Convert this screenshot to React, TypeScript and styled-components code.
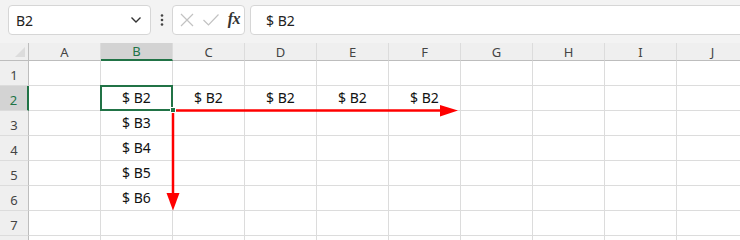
import React from "react";
import styled, { createGlobalStyle, css } from "styled-components";

const Global = createGlobalStyle`
  html, body { margin: 0; padding: 0; background: #ffffff; }
  body { width: 740px; height: 240px; overflow: hidden; font-family: "Noto Sans", "Noto Sans CJK JP", sans-serif; }
`;

const GREEN = "#217346";
const COLS = ["A", "B", "C", "D", "E", "F", "G", "H", "I", "J"];
const ROWS = [1, 2, 3, 4, 5, 6, 7, 8];
const VISIBLE_LABELS = 7;

const data: Record<string, string> = {
  B2: "$ B2",
  C2: "$ B2",
  D2: "$ B2",
  E2: "$ B2",
  F2: "$ B2",
  B3: "$ B3",
  B4: "$ B4",
  B5: "$ B5",
  B6: "$ B6",
};

const Page = styled.div`
  width: 740px;
  height: 240px;
  overflow: hidden;
  display: flex;
  flex-direction: column;
`;

const Toolbar = styled.div`
  height: 43px;
  box-sizing: border-box;
  padding: 5px 0 8px 8px;
  background: #f3f3f3;
  display: flex;
  align-items: stretch;
`;

const Box = styled.div`
  box-sizing: border-box;
  height: 30px;
  background: #ffffff;
  border: 1px solid #d6d6d6;
  border-radius: 4px;
  display: flex;
  align-items: center;
`;

const NameBox = styled(Box)`
  width: 143px;
  padding: 0 8px 0 7px;
  justify-content: space-between;
  font-size: 14px;
  color: #222;
`;

const Dots = styled.div`
  width: 21px;
  display: flex;
  align-items: center;
  justify-content: center;
  color: #444;
`;

const FuncBox = styled(Box)`
  width: 73px;
  padding: 0 4px 0 6px;
  justify-content: space-between;
`;

const Fx = styled.span`
  font-family: "Liberation Serif", "DejaVu Serif", serif;
  font-style: italic;
  font-weight: bold;
  font-size: 16px;
  color: #333;
  letter-spacing: -0.5px;
  margin-top: -2px;
`;

const FormulaInput = styled(Box)`
  margin-left: 5px;
  flex: 1;
  margin-right: -10px;
  padding-left: 15px;
  font-size: 14px;
  color: #222;
  border-radius: 4px 0 0 4px;
`;

const GridWrap = styled.div`
  position: relative;
  flex: 1;
  overflow: hidden;
`;

const Grid = styled.div`
  display: grid;
  grid-template-columns: 29px repeat(10, 72px);
  grid-template-rows: 18px repeat(8, 25px);
`;

const Corner = styled.div`
  box-sizing: border-box;
  background: #efefef;
  border-right: 1px solid #bdbdbd;
  border-bottom: 1px solid #bdbdbd;
  position: relative;
`;

const CornerTri = styled.div`
  position: absolute;
  right: 3px;
  bottom: 3px;
  width: 0;
  height: 0;
  border-left: 10px solid transparent;
  border-bottom: 10px solid #dcdcdc;
`;

const ColHead = styled.div<{ $active?: boolean }>`
  box-sizing: border-box;
  background: ${(p) => (p.$active ? "#d3d3d3" : "#efefef")};
  border-right: 1px solid #dcdcdc;
  border-bottom: 1px solid #bdbdbd;
  display: flex;
  align-items: flex-end;
  justify-content: center;
  font-size: 13px;
  line-height: 16px;
  color: ${(p) => (p.$active ? GREEN : "#444")};
  ${(p) =>
    p.$active &&
    css`
      border-bottom: 2px solid ${GREEN};
    `}
`;

const RowHead = styled.div<{ $active?: boolean }>`
  box-sizing: border-box;
  background: ${(p) => (p.$active ? "#d3d3d3" : "#efefef")};
  border-right: 1px solid #bdbdbd;
  border-bottom: 1px solid #dcdcdc;
  display: flex;
  align-items: flex-end;
  justify-content: center;
  padding-bottom: 1px;
  font-size: 13px;
  line-height: 18px;
  color: ${(p) => (p.$active ? GREEN : "#444")};
  ${(p) =>
    p.$active &&
    css`
      border-right: 2px solid ${GREEN};
    `}
`;

const Cell = styled.div`
  box-sizing: border-box;
  border-right: 1px solid #dcdcdc;
  border-bottom: 1px solid #dcdcdc;
  display: flex;
  align-items: flex-end;
  justify-content: center;
  padding-bottom: 3px;
  font-size: 14px;
  line-height: 18px;
  color: #111;
  white-space: nowrap;
`;

const Selection = styled.div`
  position: absolute;
  left: 100px;
  top: 42px;
  width: 73px;
  height: 26px;
  box-sizing: border-box;
  border: 2px solid ${GREEN};
  pointer-events: none;
`;

const Handle = styled.div`
  position: absolute;
  left: 170px;
  top: 64px;
  width: 6px;
  height: 6px;
  box-sizing: border-box;
  background: ${GREEN};
  border: 1px solid #ffffff;
`;

const Overlay = styled.svg`
  position: absolute;
  left: 0;
  top: 0;
  pointer-events: none;
`;

const Chevron = () => (
  <svg width="12" height="8" viewBox="0 0 12 8">
    <path d="M1.5 1.5 L6 6 L10.5 1.5" fill="none" stroke="#333" strokeWidth="1.4" />
  </svg>
);

const VDots = () => (
  <svg width="4" height="14" viewBox="0 0 4 14">
    <circle cx="2" cy="2.5" r="1.3" fill="#444" />
    <circle cx="2" cy="7" r="1.3" fill="#444" />
    <circle cx="2" cy="11.5" r="1.3" fill="#444" />
  </svg>
);

const CrossIcon = () => (
  <svg width="16" height="16" viewBox="0 0 16 16">
    <path d="M2 2 L14 14 M14 2 L2 14" stroke="#c2c2c2" strokeWidth="1.2" fill="none" />
  </svg>
);

const CheckIcon = () => (
  <svg width="18" height="16" viewBox="0 0 18 16">
    <path d="M1.5 8 L6.5 13 L16.5 2.5" stroke="#c2c2c2" strokeWidth="1.2" fill="none" />
  </svg>
);

export default function App() {
  return (
    <>
      <Global />
      <Page>
        <Toolbar>
          <NameBox>
            <span>B2</span>
            <Chevron />
          </NameBox>
          <Dots>
            <VDots />
          </Dots>
          <FuncBox>
            <CrossIcon />
            <CheckIcon />
            <Fx>fx</Fx>
          </FuncBox>
          <FormulaInput>$ B2</FormulaInput>
        </Toolbar>
        <GridWrap>
          <Grid>
            <Corner>
              <CornerTri />
            </Corner>
            {COLS.map((c) => (
              <ColHead key={c} $active={c === "B"}>
                {c}
              </ColHead>
            ))}
            {ROWS.map((r) => (
              <React.Fragment key={r}>
                <RowHead $active={r === 2}>{r <= VISIBLE_LABELS ? r : ""}</RowHead>
                {COLS.map((c) => (
                  <Cell key={c + r}>{data[c + r] ?? ""}</Cell>
                ))}
              </React.Fragment>
            ))}
          </Grid>
          <Selection />
          <Handle />
          <Overlay width="740" height="197" viewBox="0 0 740 197">
            <line x1="176" y1="67.5" x2="442" y2="67.5" stroke="#ff0000" strokeWidth="2.5" />
            <polygon points="440,62 458,67.5 440,73.5" fill="#ff0000" />
            <line x1="173" y1="70" x2="173" y2="152" stroke="#ff0000" strokeWidth="2.5" />
            <polygon points="166.5,150 179.5,150 173,167.5" fill="#ff0000" />
          </Overlay>
        </GridWrap>
      </Page>
    </>
  );
}
